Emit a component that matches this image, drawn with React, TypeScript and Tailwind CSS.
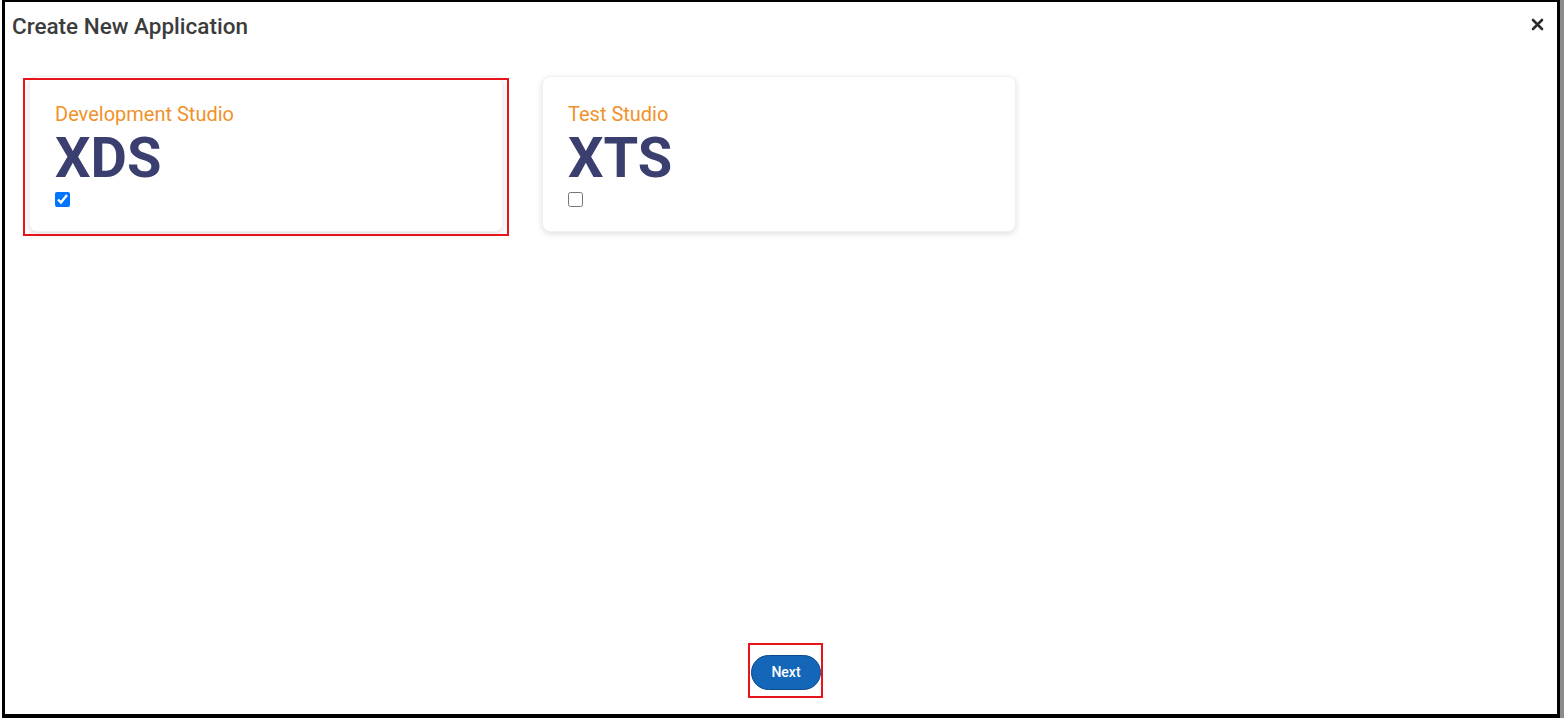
import { useState } from 'react';

type Studio = {
  id: string;
  label: string;
  code: string;
};

const studios: Studio[] = [
  { id: 'xds', label: 'Development Studio', code: 'XDS' },
  { id: 'xts', label: 'Test Studio', code: 'XTS' },
];

export default function App() {
  const [selected, setSelected] = useState<string[]>(['xds']);

  const toggle = (id: string) =>
    setSelected((prev) => (prev.includes(id) ? prev.filter((s) => s !== id) : [...prev, id]));

  return (
    <div className="flex h-[718px] w-[1564px] bg-white font-['Roboto',sans-serif]">
      <div className="ml-[2px] flex h-[718px] w-[1558px] flex-col border-t-2 border-b-4 border-l-[3px] border-r-[3px] border-black bg-white">
        <div className="flex items-start justify-between pl-[7px] pr-[13px] pt-[10px]">
          <h1 className="text-[22.5px] font-medium leading-[28px] text-[#3c3c3c]">Create New Application</h1>
          <button className="mt-[6px] text-[#2b2b2b]" aria-label="Close">
            <svg className="h-[13px] w-[13px]" viewBox="0 0 13 13" fill="none" stroke="currentColor" strokeWidth={2.6} strokeLinecap="round">
              <path d="M2 2l9 9M11 2l-9 9" />
            </svg>
          </button>
        </div>

        <div className="mt-[36px] flex gap-[39px] pl-[24px]">
          {studios.map((studio) => {
            const isOn = selected.includes(studio.id);
            return (
              <div
                key={studio.id}
                className="relative flex h-[156px] w-[474px] flex-col rounded-lg border border-[#f0f0f0] bg-white px-[25px] pt-[25px] shadow-[0_2px_6px_rgba(0,0,0,0.13)]"
              >
                {isOn && (
                  <span className="pointer-events-none absolute -left-[7px] -right-[7px] top-[1px] -bottom-[5px] border-2 border-[#e8141c]" />
                )}
                <div className="text-[20px] leading-[24px] text-[#f0922b]">{studio.label}</div>
                <div className="mt-[4px] text-[56px] font-bold leading-[56px] text-[#3a3f70]">{studio.code}</div>
                <input
                  type="checkbox"
                  checked={isOn}
                  onChange={() => toggle(studio.id)}
                  className="m-0 mt-[6px] h-[15px] w-[15px] accent-[#0075ff]"
                />
              </div>
            );
          })}
        </div>

        <div className="flex-1" />

        <div className="mb-[24px] flex justify-center pl-[10px]">
          <div className="relative">
            <span className="pointer-events-none absolute -left-[3px] -right-[2px] -top-[12px] -bottom-[8px] border-2 border-[#e8141c]" />
            <button className="h-[35px] w-[70px] rounded-full border border-[#0b4a8a] bg-[#1466b8] text-[14px] font-medium text-white">
              Next
            </button>
          </div>
        </div>
      </div>
      <div className="h-[718px] w-[4px] bg-[#8c8c8c]" />
    </div>
  );
}
